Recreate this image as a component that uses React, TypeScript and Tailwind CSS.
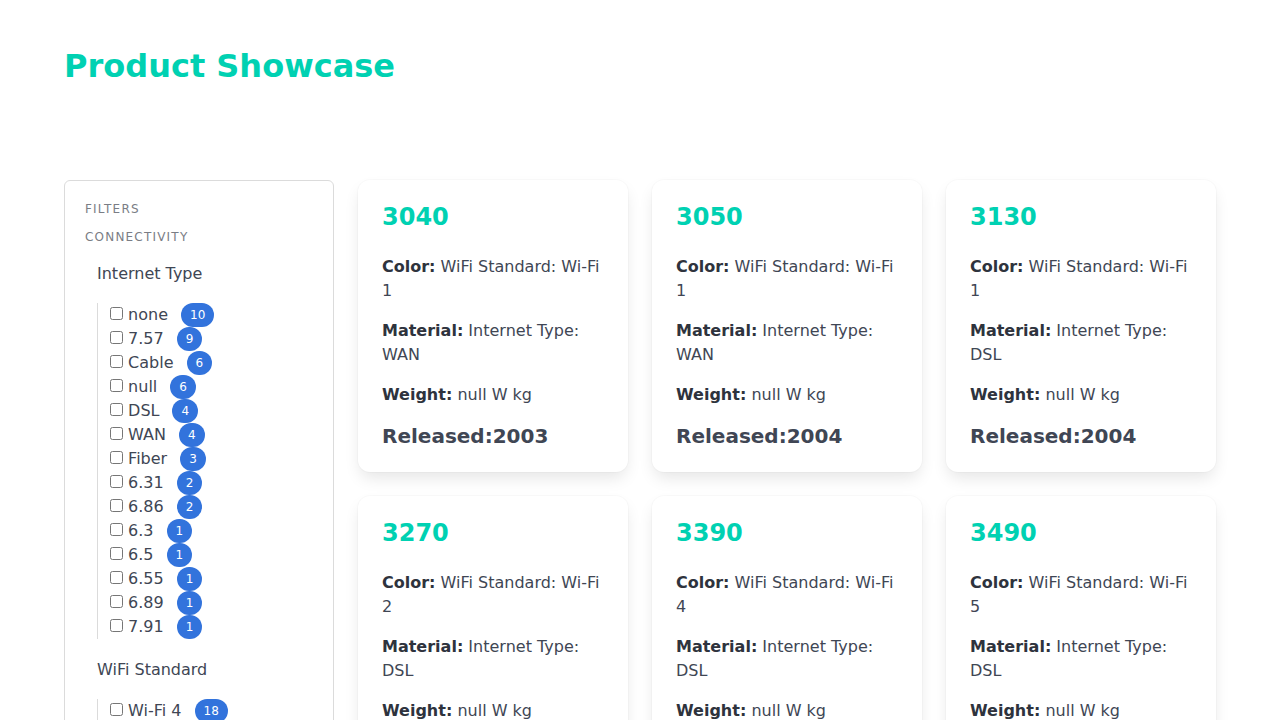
const internetTypes: [string, number][] = [
  ["none", 10],
  ["7.57", 9],
  ["Cable", 6],
  ["null", 6],
  ["DSL", 4],
  ["WAN", 4],
  ["Fiber", 3],
  ["6.31", 2],
  ["6.86", 2],
  ["6.3", 1],
  ["6.5", 1],
  ["6.55", 1],
  ["6.89", 1],
  ["7.91", 1],
];

const wifiStandards: [string, number][] = [
  ["Wi-Fi 4", 18],
  ["Wi-Fi 5", 12],
  ["Wi-Fi 1", 8],
  ["Wi-Fi 2", 6],
];

const products = [
  { id: "3040", wifi: "Wi-Fi 1", net: "WAN", year: 2003 },
  { id: "3050", wifi: "Wi-Fi 1", net: "WAN", year: 2004 },
  { id: "3130", wifi: "Wi-Fi 1", net: "DSL", year: 2004 },
  { id: "3270", wifi: "Wi-Fi 2", net: "DSL", year: 2005 },
  { id: "3390", wifi: "Wi-Fi 4", net: "DSL", year: 2006 },
  { id: "3490", wifi: "Wi-Fi 5", net: "DSL", year: 2007 },
];

function FilterGroup({ title, items }: { title: string; items: [string, number][] }) {
  return (
    <li>
      <a className="block px-3 py-2 leading-5 rounded-sm">{title}</a>
      <ul className="mx-3 mt-[11px] mb-[13px] pl-3 border-l border-[#dbdbdb]">
        {items.map(([name, count]) => (
          <li key={name} className="flex items-center h-6 leading-6">
            <label>
              <input type="checkbox" className="align-baseline" /> {name}
            </label>
            <span className="ml-[13px] inline-flex items-center justify-center h-6 px-[9px] rounded-full bg-[#3273dc] text-white text-xs leading-[18px]">
              {count}
            </span>
          </li>
        ))}
      </ul>
    </li>
  );
}

function ProductCard({ p }: { p: (typeof products)[number] }) {
  return (
    <div className="bg-white rounded-xl p-6 shadow-[0_8px_16px_-2px_rgba(10,10,10,0.1),0_0_0_1px_rgba(10,10,10,0.02)]">
      <h2 className="text-2xl leading-[1.125] font-bold text-[#00d1b2] mb-6">{p.id}</h2>
      <p className="mb-4 leading-6">
        <strong className="text-[#2e333d]">Color:</strong> WiFi Standard: {p.wifi}
      </p>
      <p className="mb-4 leading-6">
        <strong className="text-[#2e333d]">Material:</strong> Internet Type: {p.net}
      </p>
      <p className="leading-6">
        <strong className="text-[#2e333d]">Weight:</strong> null W kg
      </p>
      <p className="mt-[18px] text-xl leading-[1.125] font-bold text-[#404654]">Released:{p.year}</p>
    </div>
  );
}

export default function App() {
  return (
    <div className="min-h-screen bg-white text-[#404654] text-base font-['DejaVu_Sans',sans-serif]">
      <section className="px-16 pt-12 pb-12">
        <h1 className="text-[32px] leading-[1.125] font-bold text-[#00d1b2] mb-24">Product Showcase</h1>

        <div className="grid grid-cols-[270px_1fr] gap-6 items-start">
          <aside className="border border-[#dbdbdb] rounded-md px-5 pt-[21px] pb-5">
            <p className="text-xs leading-[1.25] tracking-[0.1em] uppercase text-[#7a7d85] mb-[13px]">Filters</p>
            <p className="text-xs leading-[1.25] tracking-[0.1em] uppercase text-[#7a7d85] mb-[11px]">Connectivity</p>
            <ul>
              <FilterGroup title="Internet Type" items={internetTypes} />
              <FilterGroup title="WiFi Standard" items={wifiStandards} />
            </ul>
          </aside>

          <main className="grid grid-cols-3 gap-6">
            {products.map((p) => (
              <ProductCard key={p.id} p={p} />
            ))}
          </main>
        </div>
      </section>
    </div>
  );
}
